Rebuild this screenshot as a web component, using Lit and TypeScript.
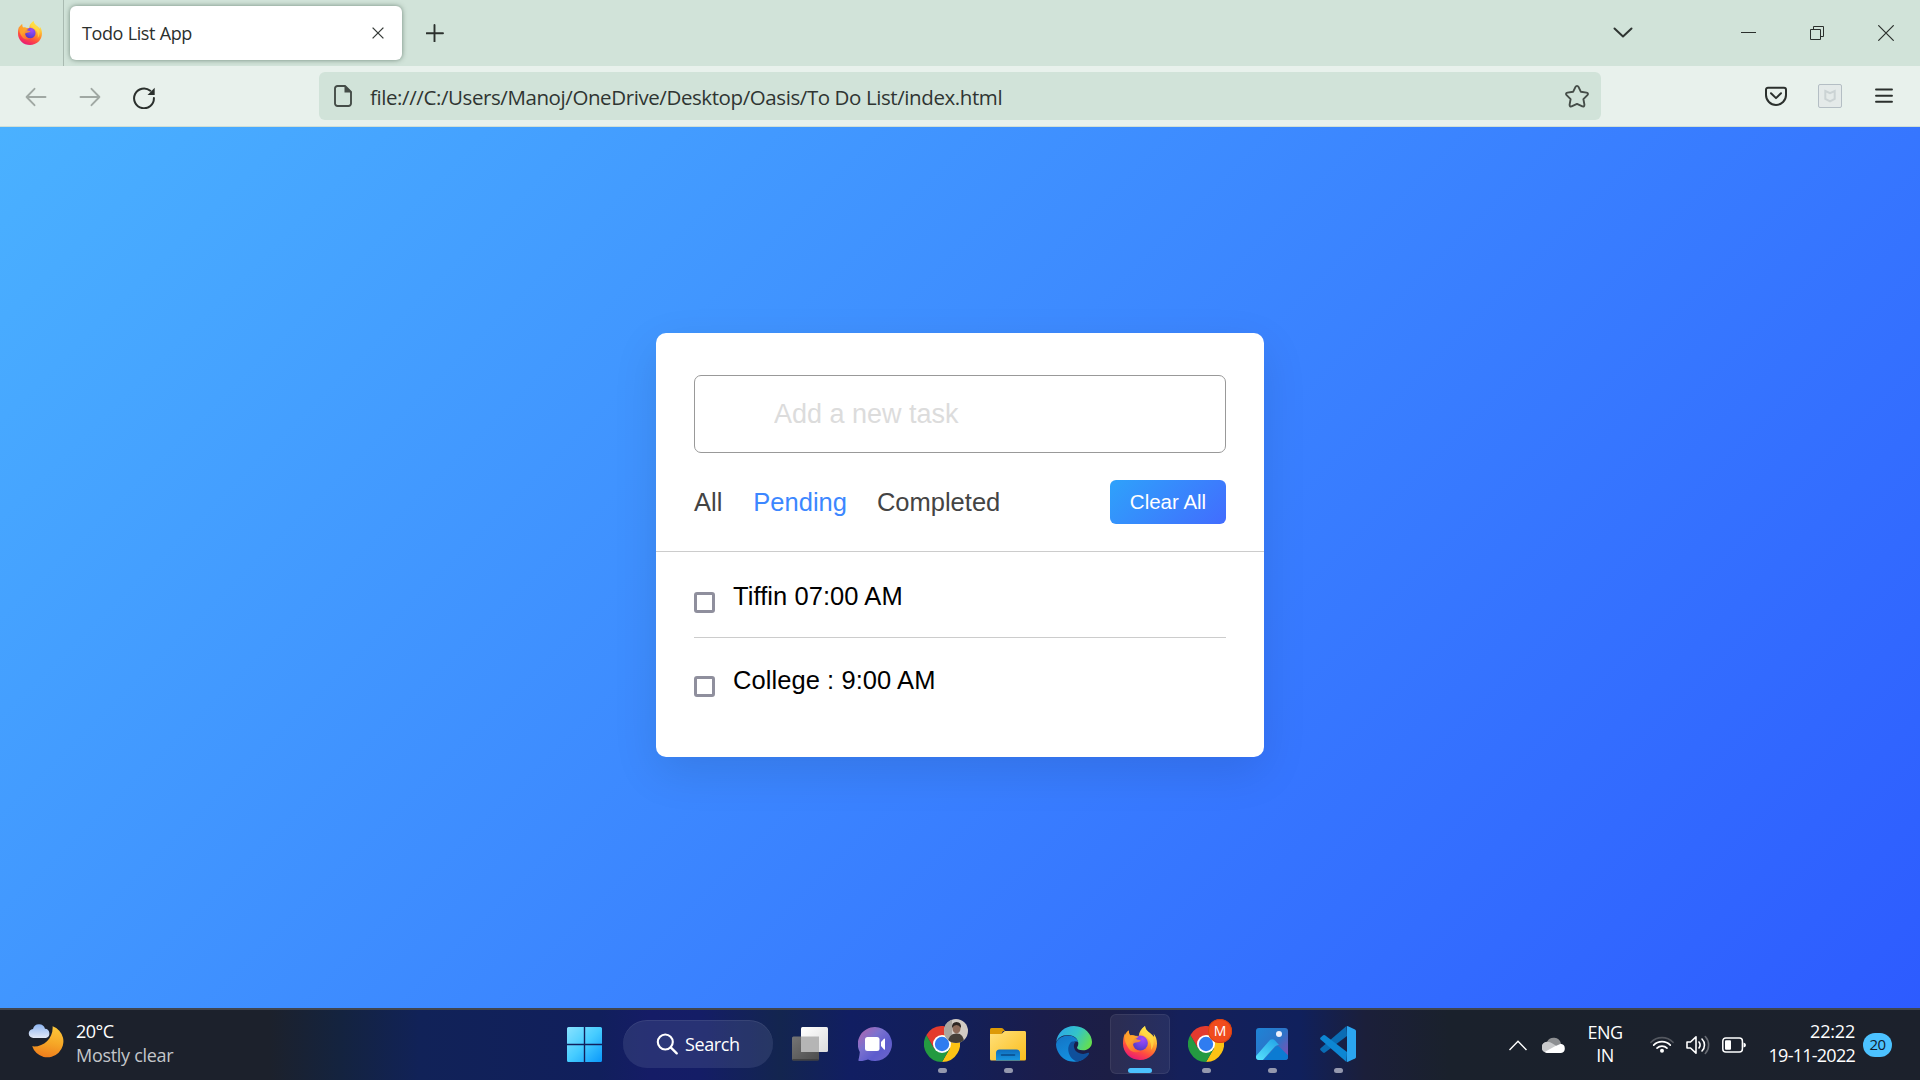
import { LitElement, html, css } from "lit";
import { customElement, state } from "lit/decorators.js";

const firefox = (size: number) => html`<svg width=${size} height=${size} viewBox="0 0 34 34">
  <defs>
    <linearGradient id="ffBody" x1="0.75" y1="0.02" x2="0.3" y2="1">
      <stop offset="0" stop-color="#fff44f" /><stop offset="0.28" stop-color="#ffc43a" />
      <stop offset="0.5" stop-color="#ff8a2a" /><stop offset="0.72" stop-color="#ff4a42" /><stop offset="1" stop-color="#e8157a" />
    </linearGradient>
    <radialGradient id="ffGlobe" cx="0.65" cy="0.25" r="0.85">
      <stop offset="0" stop-color="#a34bf5" /><stop offset="0.5" stop-color="#7542e5" /><stop offset="1" stop-color="#4a3bb8" />
    </radialGradient>
    <linearGradient id="ffFox" x1="0" y1="0" x2="0.7" y2="1">
      <stop offset="0" stop-color="#ff9a2b" /><stop offset="0.5" stop-color="#ffa82a" /><stop offset="1" stop-color="#ff6a30" />
    </linearGradient>
  </defs>
  <path fill="url(#ffBody)" d="M22 0c-4.200 3-6 6.400-6.200 10L7 9.500C6 8 5.800 6.300 6 4.600 4.200 5.600 2.800 7.300 2 9.200 1.900 8.500 1.900 7.900 2 7.200.6 9.800 0 13.800 0 17.600 0 27 7.500 34 17 34S34 27 34 17.800c0-4-1.200-7.500-3.500-10.200.4 1 .6 2.200.6 3.300C28.300 6.600 22.500 5.500 22 0z" />
  <circle cx="17.300" cy="17" r="7.600" fill="url(#ffGlobe)" />
  <path fill="url(#ffFox)" d="M6 4.600C5.800 6.300 6 8 7.300 9.300c1.600-.5 3.600-.4 5 .6 1 .4 2.300.4 3.400.5-.6 1-1.700 1.800-3.200 2.400 1.400 1 3.600 1.200 5.500 1.700-.8 1.300-2.700 1.900-5 2-1.800.2-3 1-2.900 2.600.6 3.800 4 6 7.600 5.800-4 2.500-9.500 1.300-12-2.500C2.800 18 .8 13 2 9.200 2.800 7.300 4.200 5.600 6 4.600z" opacity="0.9" />
  <path fill="#ffdd45" opacity="0.7" d="M22 0c.5 5.500 5.800 6.600 8 12 1.500 4 .5 9-2 12 .6-5-.3-9-3.600-12.200C21.500 9.500 18 8.500 18.200 5 19 3 20.300 1.300 22 0z" />
</svg>`;

const chrome = () => html`<svg width="36" height="36" viewBox="0 0 36 36">
  <path fill="#fcc314" d="M18 9H33.600A18 18 0 0 1 18 36L25.800 22.500z" />
  <path fill="#249a41" d="M2.400 9L10.200 22.500 18 27 25.800 22.500 18 36A18 18 0 0 1 2.400 9z" />
  <path fill="#e33b2e" d="M2.400 9A18 18 0 0 1 33.600 9H18L10.200 22.500z" />
  <circle cx="18" cy="18" r="9" fill="#fff" /><circle cx="18" cy="18" r="7.200" fill="#2f7cf0" />
</svg>`;

const icons = {
  close: html`<svg width="12" height="12" viewBox="0 0 12 12"><path d="M.6.6l10.800 10.800M11.400.6L.6 11.400" stroke="#363b38" stroke-width="1.300" /></svg>`,
  plus: html`<svg width="18" height="18" viewBox="0 0 18 18"><path d="M8.500 1v16.500M.5 9.300h16.500" stroke="#2b302d" stroke-width="1.900" stroke-linecap="round" /></svg>`,
  chevron: html`<svg width="20" height="12" viewBox="0 0 20 12"><path d="M1.500 1.500l8.500 8 8.500-8" fill="none" stroke="#2f3532" stroke-width="2" stroke-linecap="round" stroke-linejoin="round" /></svg>`,
  minimize: html`<svg width="15" height="14" viewBox="0 0 15 14"><path d="M0 6.500h15" stroke="#2b302d" /></svg>`,
  restore: html`<svg width="14" height="14" viewBox="0 0 14 14" fill="none" stroke="#2b302d"><path d="M.5 3.500h10v10h-10zM3.500 3.500v-3h10v10h-3" /></svg>`,
  windowClose: html`<svg width="16" height="16" viewBox="0 0 16 16"><path d="M.3.300l15.400 15.400M15.700.3L.3 15.700" stroke="#2b302d" stroke-width="1.200" /></svg>`,
  back: html`<svg width="22" height="20" viewBox="0 0 22 20" fill="none" stroke="#a0a8a3" stroke-width="1.900" stroke-linecap="round" stroke-linejoin="round"><path d="M9.500 1.800L1.600 10l7.900 8.200M1.600 10H20.500" /></svg>`,
  forward: html`<svg width="22" height="20" viewBox="0 0 22 20" fill="none" stroke="#a0a8a3" stroke-width="1.900" stroke-linecap="round" stroke-linejoin="round"><path d="M12.500 1.800L20.400 10l-7.900 8.200M20.400 10H1.500" /></svg>`,
  reload: html`<svg width="22" height="22" viewBox="0 0 22 22"><path d="M20.900 11a9.900 9.900 0 1 1-3.600-7.300" fill="none" stroke="#2b302d" stroke-width="2" stroke-linecap="round" /><path d="M21.700.8v7.200h-7.200z" fill="#2b302d" /></svg>`,
  page: html`<svg width="18" height="22" viewBox="0 0 18 22"><path d="M11 1H3.500A2.500 2.500 0 0 0 1 3.500v15A2.500 2.500 0 0 0 3.500 21h11a2.500 2.500 0 0 0 2.500-2.500V7z" fill="none" stroke="#454d48" stroke-width="1.900" stroke-linejoin="round" /><path d="M10.500 0v7.500H18z" fill="#454d48" /></svg>`,
  star: html`<svg width="26" height="26" viewBox="0 0 26 26"><path d="M13 2.900q1 0 1.500 1l2.400 4.900 5.600.8q2.400.6.900 2.500l-4 4 1 5.500q.1 2.400-2 1.800L13 20.900l-5.400 2.500q-2.100.6-2-1.800l1-5.500-4-4q-1.500-1.900.9-2.500l5.600-.8L11.500 3.900q.5-1 1.500-1z" fill="none" stroke="#454d48" stroke-width="1.900" stroke-linejoin="round" /></svg>`,
  pocket: html`<svg width="22" height="20" viewBox="0 0 22 20" fill="none" stroke="#2b302d" stroke-width="2" stroke-linecap="round" stroke-linejoin="round"><path d="M3 1.700h16a2 2 0 0 1 2 2V9a10 10 0 0 1-20 0V3.700a2 2 0 0 1 2-2z" /><path d="M6 7.300l5 4.800 5-4.800" /></svg>`,
  shield: html`<svg width="24" height="24" viewBox="0 0 24 24"><rect x=".5" y=".5" width="23" height="23" rx="1.500" fill="#e4eae9" stroke="#b4bec4" /><path d="M7.300 7l4.700 2.200L16.700 7v8L12 17.400 7.300 15z" fill="none" stroke="#cbd3d4" stroke-width="2" /></svg>`,
  menu: html`<svg width="18" height="16" viewBox="0 0 18 16"><path d="M1 1.500h16M1 7.700h16M1 13.700h16" stroke="#2b302d" stroke-width="1.900" stroke-linecap="round" /></svg>`,
  weather: html`<svg width="36" height="36" viewBox="0 0 36 36">
    <defs><linearGradient id="moon" x1="0.6" y1="0" x2="0.4" y2="1"><stop offset="0" stop-color="#fbc63a" /><stop offset="0.5" stop-color="#f6a827" /><stop offset="1" stop-color="#ef7d1c" /></linearGradient>
    <linearGradient id="cloudlet" x1="0" y1="0" x2="0" y2="1"><stop offset="0" stop-color="#8fb6f2" /><stop offset="1" stop-color="#e3e9f6" /></linearGradient></defs>
    <path fill="url(#moon)" d="M24.600 4.200A16 16 0 1 1 4.200 24.300C15 25.500 25.500 16.500 24.600 4.200z" />
    <path fill="url(#cloudlet)" d="M5.500 16A4.500 4.500 0 0 1 5 7a6.200 6.200 0 0 1 12-.2A4.700 4.700 0 0 1 18 16z" />
  </svg>`,
  start: html`<svg width="36" height="36" viewBox="0 0 36 36">
    <defs><linearGradient id="win" gradientUnits="userSpaceOnUse" x1="0" y1="0" x2="36" y2="36"><stop offset="0" stop-color="#8be3ff" /><stop offset="0.5" stop-color="#46ccff" /><stop offset="1" stop-color="#0896fb" /></linearGradient></defs>
    <path fill="url(#win)" d="M1.500 1h15.300v16.800H0V2.500A1.500 1.500 0 0 1 1.500 1zM18.200 1H33.500A1.500 1.500 0 0 1 35 2.500v15.300H18.200zM0 19.200h16.800V36H1.500A1.500 1.500 0 0 1 0 34.500zM18.200 19.200H35v15.300a1.500 1.500 0 0 1-1.500 1.500H18.200z" />
  </svg>`,
  search: html`<svg width="22" height="22" viewBox="0 0 22 22"><circle cx="9.300" cy="9" r="7.500" fill="#2c3878" stroke="#fff" stroke-width="2.100" /><path d="M14.700 14.400l6 6" stroke="#fff" stroke-width="2.300" stroke-linecap="round" /></svg>`,
  taskView: html`<svg width="36" height="36" viewBox="0 0 36 36">
    <defs><linearGradient id="tvA" x1="0" y1="0" x2="1" y2="1"><stop offset="0" stop-color="#fff" /><stop offset="1" stop-color="#dcdcdc" /></linearGradient>
    <linearGradient id="tvB" x1="0" y1="0" x2="1" y2="1"><stop offset="0" stop-color="#757575" /><stop offset="1" stop-color="#4c4c4c" /></linearGradient></defs>
    <rect x="0" y="10.500" width="27" height="24" rx="1.500" fill="url(#tvB)" /><rect x="9" y="1" width="27" height="25" rx="1.500" fill="url(#tvA)" /><path d="M9 10.500h18V26H10.500A1.500 1.500 0 0 1 9 24.500z" fill="#b5b5b5" /><path d="M.5 33.800h26" stroke="#3b3b3b" stroke-width="1.200" />
  </svg>`,
  chat: html`<svg width="36" height="36" viewBox="0 0 36 36">
    <defs><linearGradient id="chat" x1="0.1" y1="0.1" x2="0.9" y2="0.9"><stop offset="0" stop-color="#a767b4" /><stop offset="0.35" stop-color="#7b72cf" /><stop offset="0.7" stop-color="#5d5ccd" /><stop offset="1" stop-color="#6a63c9" /></linearGradient></defs>
    <path fill="url(#chat)" d="M17 1a17 17 0 1 1-7 32.500C7 34.500 3 35.500.5 34.800 0 34.500 1.500 31 1.800 26A17 17 0 0 1 17 1z" />
    <rect x="7" y="11" width="14.500" height="14" rx="2.500" fill="#fff" /><path fill="#fff" d="M23 16l3-3.300q1-.7 1 .6v9.500q0 1.300-1 .6L23 20z" />
  </svg>`,
  explorer: html`<svg width="36" height="36" viewBox="0 0 36 36">
    <defs><linearGradient id="fold" x1="0" y1="0" x2="1" y2="1"><stop offset="0" stop-color="#ffe07a" /><stop offset="1" stop-color="#fbbd1c" /></linearGradient>
    <linearGradient id="foldTray" x1="0" y1="0" x2="0" y2="1"><stop offset="0" stop-color="#0f6cbd" /><stop offset="1" stop-color="#1997e0" /></linearGradient></defs>
    <path fill="#dd9a06" d="M1.500 2h10q1 0 1.700.8L15 5h-2l-2 4H0V3.500A1.500 1.500 0 0 1 1.500 2z" />
    <path fill="url(#fold)" d="M0 8h10.500q1 0 1.800-.8L13.500 6q.8-.9 1.800-.9H34.500A1.500 1.500 0 0 1 36 6.500V33a1.500 1.500 0 0 1-1.500 1.500h-33A1.500 1.500 0 0 1 0 33z" />
    <path fill="url(#foldTray)" d="M6 34.500v-7.500a3.500 3.500 0 0 1 3.500-3.500h17A3.500 3.500 0 0 1 30 27v7.500z" /><path d="M11.500 29h13" stroke="#084a88" stroke-width="1.600" stroke-linecap="round" />
  </svg>`,
  edge: html`<svg width="36" height="36" viewBox="0 0 36 36">
    <defs><linearGradient id="edTop" x1="0" y1="0.3" x2="1" y2="0.7"><stop offset="0" stop-color="#2ba8e8" /><stop offset="0.5" stop-color="#34c4c8" /><stop offset="1" stop-color="#66e04a" /></linearGradient>
    <linearGradient id="edLow" x1="0" y1="0" x2="0.5" y2="1"><stop offset="0" stop-color="#1473c4" /><stop offset="1" stop-color="#1391e0" /></linearGradient></defs>
    <path fill="url(#edLow)" d="M0 18.500C.5 13 6 9.500 12 9.500c5.500 0 10 3.500 10 6.500-4-1.500-7.500 1-7.500 5.500 0 7 7 12.500 13 11.500A18 18 0 0 1 0 18.500z" />
    <path fill="#0f509c" d="M14.200 17c-4.500 6-1 16 6.800 18.700C26 35 30.500 32 33 28c.5-1-.3-1.700-1.200-1.200-5 2.500-11.500.5-13.300-4C17.300 20 18 17.500 19.500 16c-2-.8-4-.5-5.300 1z" />
    <path fill="url(#edTop)" d="M.1 16.500C1 6.500 9 0 18 0c11 0 18 8.500 18 16 0 5-4 8.300-9 8.300-4 0-6-1.500-6-2.500 0-.9 1.300-1.500 1.300-4.300C22.300 13 18 9 12 9 5.500 9 1.300 12.500.1 16.500z" />
  </svg>`,
  photos: html`<svg width="36" height="36" viewBox="0 0 36 36">
    <defs><linearGradient id="phBg" x1="0" y1="0" x2="1" y2="0.8"><stop offset="0" stop-color="#1e84d6" /><stop offset="0.6" stop-color="#2c74c8" /><stop offset="1" stop-color="#7a52b4" /></linearGradient>
    <linearGradient id="phHill" x1="0.8" y1="0" x2="0.1" y2="1"><stop offset="0" stop-color="#25a7e8" /><stop offset="1" stop-color="#58e2fc" /></linearGradient>
    <clipPath id="phClip"><rect x="2" y="2" width="32" height="32" rx="3" /></clipPath></defs>
    <g clip-path="url(#phClip)"><rect x="2" y="2" width="32" height="32" fill="url(#phBg)" />
    <path fill="#0c7bd2" d="M8 36L21.500 21q2-2 4 0L38 33v3z" /><path fill="url(#phHill)" d="M2 30L15.500 14.500q2.800-2.500 5.500 0l4 4.600q-2-.7-4 1.400L8 35H2z" /></g>
    <circle cx="25" cy="8" r="3" fill="#eef0fb" />
  </svg>`,
  code: html`<svg width="36" height="36" viewBox="0 0 36 36">
    <path fill="#0a6cb4" d="M26.500 0L27 10 5 26.600q-1 .7-2 0L.6 24.300q-1-1 0-2z" />
    <path fill="#0d86d3" d="M3.200 9.300q1-.6 1.800 0L27 26l-.5 10L.6 13.500q-1-1 0-2z" />
    <path fill="#2ba5f0" d="M27 .2q.4-.2 1 0l7 3.200q1 .6 1 1.700v25.800q0 1.100-1 1.700l-7 3.200q-.6.200-1 0z" />
  </svg>`,
  up: html`<svg width="18" height="11" viewBox="0 0 18 11"><path d="M.5 10L9 1.200 17.500 10" fill="none" stroke="#fff" stroke-width="1.400" /></svg>`,
  cloud: html`<svg width="24" height="16" viewBox="0 0 24 16"><path fill="#8e9093" d="M5 5a7.500 7.500 0 0 1 14 1.500L12 10 5 15.500A5 5 0 0 1 5 5z" /><path fill="#c9cacc" d="M5 4.800q3-.3 5 1.500l5 3L5.500 15.900A5.300 5.300 0 0 1 5 4.800z" /><path fill="#fff" d="M3 14.800L13.500 9l5-2.300a4.700 4.700 0 0 1 .5 9.300H5q-1.200-.2-2-1.200z" /></svg>`,
  wifi: html`<svg width="24" height="18" viewBox="0 0 24 18" fill="none" stroke-linecap="round"><path d="M1 6.300a15.300 15.300 0 0 1 22 0" stroke="#53575f" stroke-width="1.600" /><path d="M3.700 9.200a11.600 11.600 0 0 1 16.600 0M7 12.200a7 7 0 0 1 10 0" stroke="#fff" stroke-width="1.700" /><circle cx="12" cy="14.700" r="2" fill="#fff" /></svg>`,
  volume: html`<svg width="24" height="20" viewBox="0 0 24 20" fill="none" stroke="#fff" stroke-width="1.600" stroke-linecap="round" stroke-linejoin="round"><path d="M1 7h3.500L10 1.800v16.400L4.500 13H1z" /><path d="M13 7a5 5 0 0 1 0 6M16 4a8.500 8.500 0 0 1 0 12" /><path d="M19.300 1.500a12.500 12.500 0 0 1 0 17" stroke="#666a72" /></svg>`,
  battery: html`<svg width="24" height="16" viewBox="0 0 24 16"><rect x=".8" y=".9" width="19.600" height="14.200" rx="3" fill="none" stroke="#fff" stroke-width="1.500" /><rect x="3" y="3.300" width="6" height="9.400" rx="1" fill="#fff" /><path d="M21.500 5.500q2.500.5 2.500 2.500t-2.500 2.500z" fill="#fff" /></svg>`,
};

@customElement("browser-chrome")
class BrowserChrome extends LitElement {
  static styles = css`
    :host { display: block; font-family: "Open Sans", "Noto Sans", sans-serif; color: #2b302d; }
    svg { display: block; flex: none; }
    .tabs { display: flex; align-items: center; height: 66px; background: #d1e3d9; box-sizing: border-box; padding-right: 26px; }
    .pinned { display: flex; align-items: center; width: 64px; height: 66px; box-sizing: border-box; padding-left: 18px; border-right: 1px solid #a9bab1; }
    .tab { display: flex; align-items: center; justify-content: space-between; width: 332px; height: 54px; margin-left: 6px; box-sizing: border-box; padding: 0 18px 0 12px; background: #fff; border-radius: 6px; box-shadow: 0 0 5px rgba(50, 75, 60, 0.6); }
    .title { font-size: 18px; line-height: 24px; letter-spacing: -0.43px; word-spacing: 0.6px; white-space: nowrap; }
    .plus { margin-left: 24px; }
    .controls { display: flex; align-items: center; margin-left: auto; }
    .min { margin-left: 108px; }
    .res, .cls { margin-left: 54px; }
    .bar { display: flex; align-items: center; height: 60px; background: #e8f1ec; border-bottom: 1px solid #cfdfd6; padding: 0 27px 0 25px; }
    .nav { display: flex; align-items: center; gap: 32px; width: 294px; padding-top: 2px; }
    .reload { padding-top: 2px; }
    .url { display: flex; align-items: center; width: 1282px; height: 48px; box-sizing: border-box; padding: 0 11px 0 15px; border-radius: 6px; background: #d1e3d9; }
    .address { margin-left: 18px; padding-top: 1px; flex: 1; font-size: 20.5px; line-height: 28px; letter-spacing: -0.41px; white-space: nowrap; color: #2f3532; }
    .tools { display: flex; align-items: center; gap: 32px; margin-left: auto; }
    .shield { margin: 0 1px 0 -1px; }
  `;
  render() {
    return html`
      <div class="tabs">
        <div class="pinned">${firefox(24)}</div>
        <div class="tab"><span class="title">Todo List App</span>${icons.close}</div>
        <div class="plus">${icons.plus}</div>
        <div class="controls">
          ${icons.chevron}
          <span class="min">${icons.minimize}</span><span class="res">${icons.restore}</span><span class="cls">${icons.windowClose}</span>
        </div>
      </div>
      <div class="bar">
        <div class="nav">${icons.back}${icons.forward}<span class="reload">${icons.reload}</span></div>
        <div class="url">${icons.page}<span class="address">file:///C:/Users/Manoj/OneDrive/Desktop/Oasis/To Do List/index.html</span>${icons.star}</div>
        <div class="tools">${icons.pocket}<span class="shield">${icons.shield}</span>${icons.menu}</div>
      </div>
    `;
  }
}

type Filter = "All" | "Pending" | "Completed";

@customElement("todo-card")
class TodoCard extends LitElement {
  @state() private filter: Filter = "Pending";
  private tasks = ["Tiffin 07:00 AM", "College : 9:00 AM"];
  static styles = css`
    :host { display: block; width: 608px; height: 424px; box-sizing: border-box; padding-top: 42px; background: #fff; border-radius: 10px; box-shadow: 0 15px 45px rgba(0, 0, 0, 0.1); font-family: "Liberation Sans", Arial, sans-serif; }
    .entry { display: block; width: 532px; height: 78px; margin: 0 38px; box-sizing: border-box; padding: 0 24px 0 79px; border: 1px solid #999; border-radius: 7px; font: 27px "Liberation Sans", Arial, sans-serif; outline: none; background: #fff; }
    .entry::placeholder { color: #dcdcdc; opacity: 1; }
    .controls { display: flex; align-items: center; justify-content: space-between; height: 98px; padding: 0 38px; border-bottom: 1px solid #ccc; }
    .filters { display: flex; gap: 30px; font-size: 25.5px; color: #444; }
    .filter:first-child { margin-right: 1px; }
    .filter.active { color: #3c87ff; }
    .clear { width: 116px; height: 44px; padding: 0; border: 0; border-radius: 6px; color: #fff; font: 20.5px "Liberation Sans", Arial, sans-serif; background: linear-gradient(135deg, #2ea2fb 0%, #426cfe 100%); }
    .tasks { margin: 0; padding: 0 38px; list-style: none; }
    .task { display: flex; align-items: flex-start; height: 84px; box-sizing: border-box; border-bottom: 1px solid #ccc; font-size: 25.5px; line-height: 30px; letter-spacing: 0.07px; color: #000; padding-top: 29px; }
    .task:first-child { height: 86px; }
    .task:last-child { border-bottom: 0; padding-top: 27px; }
    .box { width: 21px; height: 21px; margin: 11px 18px 0 0; box-sizing: border-box; border: 3px solid #8f8f9d; border-radius: 3px; background: #fff; }
  `;
  render() {
    const filters: Filter[] = ["All", "Pending", "Completed"];
    return html`
      <input class="entry" type="text" placeholder="Add a new task" />
      <div class="controls">
        <div class="filters">
          ${filters.map((f) => html`<span class="filter ${f === this.filter ? "active" : ""}" @click=${() => (this.filter = f)}>${f}</span>`)}
        </div>
        <button class="clear">Clear All</button>
      </div>
      <ul class="tasks">
        ${this.tasks.map((t) => html`<li class="task"><span class="box"></span><span>${t}</span></li>`)}
      </ul>
    `;
  }
}

@customElement("task-bar")
class TaskBar extends LitElement {
  static styles = css`
    :host { display: grid; grid-template-columns: 552px 819px 549px; height: 72px; box-sizing: border-box; border-top: 2px solid #40454f; color: #fff; font-family: "Open Sans", "Noto Sans", sans-serif; font-size: 18px;
      background: linear-gradient(90deg, #1c212c 0, #1c212c 270px, #14233f 340px, #112258 420px, #111f5c 600px, #151c66 650px, #141d66 700px, #13254f 780px, #111e62 850px, #131f58 960px, #1a1d4c 1040px, #1c1e45 1110px, #15205a 1180px, #10205c 1300px, #1b1f3a 1365px, #1a212c 1450px, #1c212c 1920px); }
    svg { display: block; flex: none; }
    .weather { display: flex; padding: 12px 0 0 28px; gap: 12px; }
    .lines { display: flex; flex-direction: column; line-height: 24px; margin-top: -3px; white-space: nowrap; }
    .temp { letter-spacing: -0.5px; }
    .muted { color: #c3c6ca; letter-spacing: -0.3px; }
    .apps { display: flex; align-items: flex-start; padding-top: 4px; }
    .cell { position: relative; display: flex; flex: none; justify-content: center; width: 60px; height: 60px; margin: 0 3px; box-sizing: border-box; padding-top: 12px; border-radius: 6px; }
    .cell.current { background: rgba(255, 255, 255, 0.07); box-shadow: inset 0 0 0 1px rgba(255, 255, 255, 0.07); }
    .search { display: flex; flex: none; align-items: center; width: 150px; height: 48px; margin: 6px 4px 0 5px; box-sizing: border-box; padding-left: 33px; gap: 7px; border-radius: 24px; background: rgba(105, 115, 165, 0.24); box-shadow: inset 0 1px 0 rgba(255, 255, 255, 0.08); letter-spacing: -0.4px; }
    .mark { position: absolute; left: 26px; bottom: 1px; width: 9px; height: 5px; border-radius: 3px; background: #9498ae; }
    .current .mark { left: 18px; width: 24px; background: #4cc2ff; }
    .badge { position: absolute; left: 32px; top: 5px; width: 24px; height: 24px; border-radius: 50%; overflow: hidden; font-size: 14px; line-height: 24px; text-align: center; }
    .badge.letter { background: #f04c1d; box-shadow: inset 0 0 0 1px #d9420f; }
    .tray { display: flex; padding: 0 28px 0 138px; align-items: center; height: 70px; }
    .cloud { margin-left: 15px; }
    .lang { width: 50px; margin: -2px 0 0 14px; text-align: center; line-height: 23px; letter-spacing: -0.5px; }
    .status { display: flex; align-items: center; gap: 12px; margin-left: 20px; }
    .clock { display: flex; flex-direction: column; margin: -4px 8px 0 auto; text-align: right; line-height: 24px; white-space: nowrap; letter-spacing: -0.2px; }
    .date { letter-spacing: -0.75px; }
    .count { width: 29px; height: 24px; border-radius: 12px; background: #4cc2ff; color: #10202c; font-size: 15px; line-height: 22px; text-align: center; letter-spacing: -0.5px; }
  `;
  render() {
    const avatar = html`<span class="badge"><svg width="24" height="24" viewBox="0 0 24 24"><rect width="24" height="24" fill="#d2ccc4" /><rect width="8" height="24" fill="#aaa69e" /><path d="M4 24q0-9 8-9.500T20 24z" fill="#454039" /><ellipse cx="12.500" cy="9.500" rx="4" ry="5" fill="#8d6b59" /><path d="M8 9q-.5-6 4.500-6t4.500 6q-2-3-4.500-3T8 9z" fill="#2e2622" /></svg></span>`;
    return html`
      <div class="weather">${icons.weather}
        <div class="lines"><span class="temp">20°C</span><span class="muted">Mostly clear</span></div>
      </div>
      <div class="apps">
        <div class="cell">${icons.start}</div>
        <div class="search">${icons.search}<span>Search</span></div>
        <div class="cell">${icons.taskView}</div>
        <div class="cell">${icons.chat}</div>
        <div class="cell">${chrome()}${avatar}<span class="mark"></span></div>
        <div class="cell">${icons.explorer}<span class="mark"></span></div>
        <div class="cell">${icons.edge}</div>
        <div class="cell current">${firefox(34)}<span class="mark"></span></div>
        <div class="cell">${chrome()}<span class="badge letter">M</span><span class="mark"></span></div>
        <div class="cell">${icons.photos}<span class="mark"></span></div>
        <div class="cell">${icons.code}<span class="mark"></span></div>
      </div>
      <div class="tray">
        ${icons.up}<span class="cloud">${icons.cloud}</span>
        <div class="lang">ENG<br />IN</div>
        <div class="status">${icons.wifi}${icons.volume}${icons.battery}</div>
        <div class="clock"><span>22:22</span><span class="date">19-11-2022</span></div>
        <span class="count">20</span>
      </div>
    `;
  }
}

@customElement("app-root")
class AppRoot extends LitElement {
  static styles = css`
    :host { display: flex; flex-direction: column; width: 1920px; height: 1080px; overflow: hidden; }
    .page { flex: 1; display: flex; justify-content: center; align-items: flex-start; box-sizing: border-box; padding-top: 206px; background: linear-gradient(135deg, #4ab1ff, #2d5bff); }
  `;
  render() {
    return html`<browser-chrome></browser-chrome>
      <main class="page"><todo-card></todo-card></main>
      <task-bar></task-bar>`;
  }
}
